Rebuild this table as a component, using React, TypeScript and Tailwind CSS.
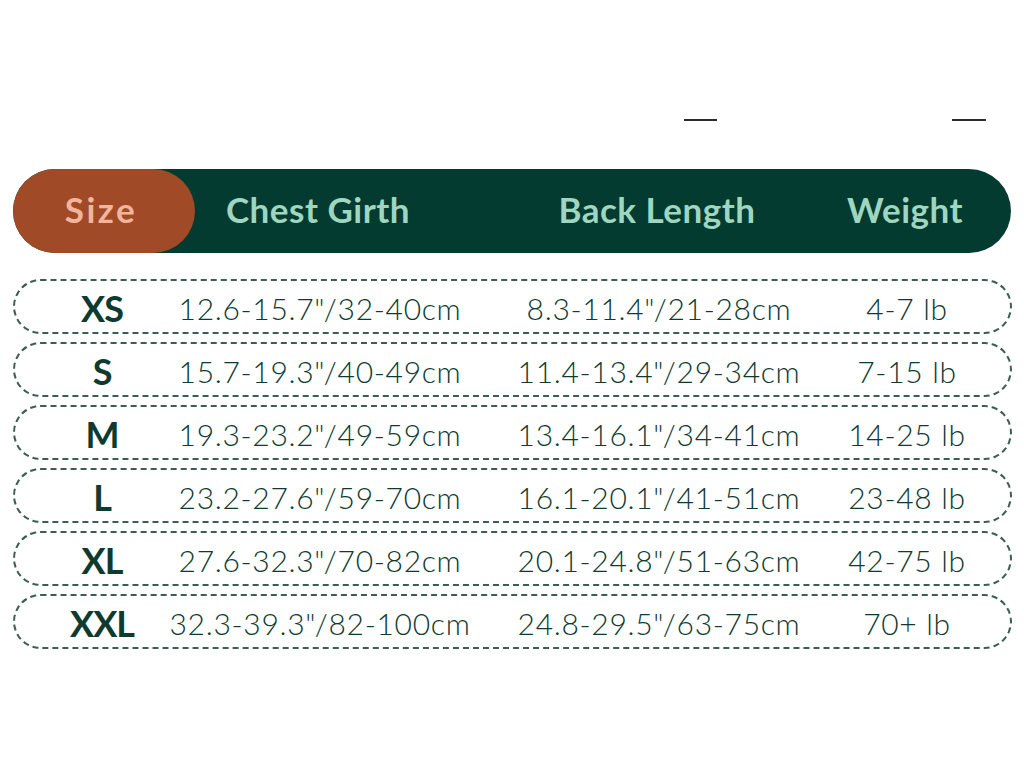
import React from "react";

const rows = [
  { size: "XS", chest: '12.6-15.7"/32-40cm', back: '8.3-11.4"/21-28cm', weight: "4-7 lb" },
  { size: "S", chest: '15.7-19.3"/40-49cm', back: '11.4-13.4"/29-34cm', weight: "7-15 lb" },
  { size: "M", chest: '19.3-23.2"/49-59cm', back: '13.4-16.1"/34-41cm', weight: "14-25 lb" },
  { size: "L", chest: '23.2-27.6"/59-70cm', back: '16.1-20.1"/41-51cm', weight: "23-48 lb" },
  { size: "XL", chest: '27.6-32.3"/70-82cm', back: '20.1-24.8"/51-63cm', weight: "42-75 lb" },
  { size: "XXL", chest: '32.3-39.3"/82-100cm', back: '24.8-29.5"/63-75cm', weight: "70+ lb" },
];

const cols = "grid grid-cols-[174px_262px_416px_80px]";

const App = () => {
  return (
    <div className="w-[1024px] h-[768px] bg-white font-['Lato',sans-serif] overflow-hidden">
      {/* little marks at the top */}
      <div className="flex pt-[119px] h-[169px]">
        <div className="ml-[684px] w-[33px] h-[2px] bg-[#2b2b2b]" />
        <div className="ml-[235px] w-[34px] h-[2px] bg-[#2b2b2b]" />
      </div>

      {/* header */}
      <div className="mx-[13px] w-[998px] h-[84px] rounded-full bg-[#033b30] relative">
        <div className="absolute left-0 top-0 h-[84px] w-[182px] rounded-full bg-[#a14a28]" />
        <div className={`${cols} relative h-full items-center pb-[3px] text-[35px] font-bold tracking-[0.5px]`}>
          <div className="flex justify-center text-[#f3b49d] pl-[2px] tracking-[2.5px]">Size</div>
          <div className="flex justify-center text-[#9fd6bf] whitespace-nowrap">Chest Girth</div>
          <div className="flex justify-center text-[#9fd6bf] whitespace-nowrap">Back Length</div>
          <div className="flex justify-center text-[#9fd6bf] whitespace-nowrap">Weight</div>
        </div>
      </div>

      {/* rows */}
      <div className="mt-[26px] mx-[13px] w-[999px] flex flex-col gap-[8px]">
        {rows.map((r) => (
          <div
            key={r.size}
            className={`${cols} h-[55px] items-center pb-[6px] rounded-full border-2 border-dashed border-[#3b5d53] text-[#0e3a30]`}
          >
            <div className="flex justify-center whitespace-nowrap text-[36px] font-bold tracking-[-1px]">{r.size}</div>
            <div className="flex justify-center whitespace-nowrap text-[30px] font-light tracking-[0.7px]">{r.chest}</div>
            <div className="flex justify-center whitespace-nowrap text-[30px] font-light tracking-[0.7px]">{r.back}</div>
            <div className="flex justify-center whitespace-nowrap text-[30px] font-light tracking-[0.7px]">{r.weight}</div>
          </div>
        ))}
      </div>
    </div>
  );
};

export default App;
